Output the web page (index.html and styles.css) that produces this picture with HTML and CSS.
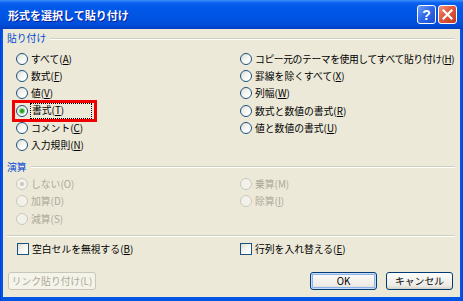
FILE: index.html
```html
<!DOCTYPE html>
<html lang="ja">
<head>
    <meta charset="UTF-8">
    <title>形式を選択して貼り付け</title>
    <link rel="stylesheet" href="styles.css">
</head>
<body>
    <div class="window">
        <div class="titlebar">
            <span class="title">形式を選択して貼り付け</span>
            <div class="title-buttons">
                <span class="tbtn help">?</span>
                <span class="tbtn close">
                    <svg width="11" height="11" viewBox="0 0 11 11">
                        <path d="M1.5 1.5 L9.5 9.5 M9.5 1.5 L1.5 9.5" stroke="#fff" stroke-width="2.2" stroke-linecap="square"/>
                    </svg>
                </span>
            </div>
        </div>

        <div class="content">
            <div class="group-head"><span>貼り付け</span></div>
            <div class="options paste">
                <div class="col">
                    <div class="opt"><span class="radio"></span><span>すべて(<u>A</u>)</span></div>
                    <div class="opt"><span class="radio"></span><span>数式(<u>F</u>)</span></div>
                    <div class="opt"><span class="radio"></span><span>値(<u>V</u>)</span></div>
                    <div class="opt marked">
                        <span class="radio on"></span><span class="focus">書式(<u>T</u>)</span>
                        <span class="highlight"></span>
                    </div>
                    <div class="opt"><span class="radio"></span><span>コメント(<u>C</u>)</span></div>
                    <div class="opt"><span class="radio"></span><span>入力規則(<u>N</u>)</span></div>
                </div>
                <div class="col">
                    <div class="opt"><span class="radio"></span><span class="long">コピー元のテーマを使用してすべて貼り付け(<u>H</u>)</span></div>
                    <div class="opt"><span class="radio"></span><span>罫線を除くすべて(<u>X</u>)</span></div>
                    <div class="opt"><span class="radio"></span><span>列幅(<u>W</u>)</span></div>
                    <div class="opt"><span class="radio"></span><span>数式と数値の書式(<u>R</u>)</span></div>
                    <div class="opt"><span class="radio"></span><span>値と数値の書式(<u>U</u>)</span></div>
                </div>
            </div>

            <div class="group-head second"><span>演算</span></div>
            <div class="options ops">
                <div class="col">
                    <div class="opt dis"><span class="radio on"></span><span>しない(O)</span></div>
                    <div class="opt dis"><span class="radio"></span><span>加算(D)</span></div>
                    <div class="opt dis"><span class="radio"></span><span>減算(S)</span></div>
                </div>
                <div class="col">
                    <div class="opt dis"><span class="radio"></span><span>乗算(M)</span></div>
                    <div class="opt dis"><span class="radio"></span><span>除算(<u>I</u>)</span></div>
                </div>
            </div>

            <div class="sep"></div>

            <div class="checks">
                <div class="opt check-left"><span class="checkbox"></span><span>空白セルを無視する(<u>B</u>)</span></div>
                <div class="opt"><span class="checkbox"></span><span>行列を入れ替える(<u>E</u>)</span></div>
            </div>

            <div class="buttons">
                <span class="btn disabled link">リンク貼り付け(L)</span>
                <span class="spacer"></span>
                <span class="btn default">OK</span>
                <span class="btn">キャンセル</span>
            </div>
        </div>
    </div>
</body>
</html>
```

FILE: styles.css
```css
* {
    box-sizing: border-box;
}

body {
    margin: 0;
    width: 463px;
    height: 301px;
    overflow: hidden;
    font-family: "Noto Sans CJK JP", "Liberation Sans", sans-serif;
    font-size: 9.8px;
    color: #000000;
    background-color: #FFFFFF;
}

.window {
    width: 463px;
    height: 301px;
    display: flex;
    flex-direction: column;
    background: linear-gradient(to right, #0831D9 0, #0055E5 1px, #0055E5 462px, #0831D9 463px);
}

/* title bar */
.titlebar {
    height: 29px;
    display: flex;
    align-items: center;
    justify-content: space-between;
    padding: 0 6px 0 8px;
    background: linear-gradient(to bottom, #3D8FFB 0, #0A5FF0 3px, #0058E8 9px, #0054E3 18px, #004DD9 25px, #003EC0 29px);
}

.title {
    color: #FFFFFF;
    font-weight: bold;
    font-size: 11px;
    text-shadow: 1px 1px 0 #0A1E9A;
}

.title-buttons {
    display: flex;
    gap: 2px;
}

.tbtn {
    width: 19px;
    height: 19px;
    border: 1px solid #FFFFFF;
    border-radius: 3px;
    display: flex;
    align-items: center;
    justify-content: center;
    color: #FFFFFF;
}

.help {
    background: linear-gradient(135deg, #6E9DF8 0%, #2F66E8 50%, #1A4DD6 100%);
    font-family: "Liberation Sans", sans-serif;
    font-weight: bold;
    font-size: 14px;
    line-height: 1;
}

.close {
    background: linear-gradient(135deg, #F0937A 0%, #E0583A 45%, #C53A1E 100%);
}

/* dialog body */
.content {
    flex: 1;
    margin: 0 3px 4px;
    background-color: #ECE9D8;
    padding: 3px 5px 0 4px;
    display: flex;
    flex-direction: column;
}

.group-head {
    height: 12px;
    line-height: 12px;
    display: flex;
    align-items: center;
    gap: 4px;
    color: #0046D5;
}

.group-head::after {
    content: "";
    flex: 1;
    height: 1px;
    background-color: #D0D0BF;
    box-shadow: 0 1px 0 #FFFFFF;
}

.group-head.second {
    margin-top: 7px;
}

.options {
    display: flex;
    padding-left: 9px;
}

.paste {
    margin-top: 6px;
}

.ops {
    margin-top: 2.5px;
}

.options .col:first-child {
    width: 224px;
    flex-shrink: 0;
}

.opt {
    height: 17.3px;
    display: flex;
    align-items: center;
    gap: 3px;
    white-space: nowrap;
}

.opt u {
    text-decoration-thickness: 1px;
    text-underline-offset: 1px;
}

.long {
    letter-spacing: -0.4px;
}

.radio {
    width: 12px;
    height: 12px;
    flex-shrink: 0;
    border: 1px solid #1C5180;
    border-radius: 50%;
    background: linear-gradient(135deg, #DCDBD3 0%, #F4F4F0 45%, #FFFFFF 80%);
    display: flex;
    align-items: center;
    justify-content: center;
}

.radio.on::after {
    content: "";
    width: 4px;
    height: 4px;
    border-radius: 50%;
    background-color: #21A121;
    box-shadow: 0 0 0 1px #8AD88A;
}

.opt.dis {
    color: #ACA899;
}

.dis .radio {
    border-color: #CAC8BB;
    background: #F2F1EA;
}

.dis .radio.on::after {
    background-color: #CAC8BB;
    box-shadow: none;
}

.marked {
    position: relative;
}

.focus {
    width: 62px;
    height: 16px;
    line-height: 15px;
    margin-left: -1px;
    padding-left: 2px;
    outline: 1px dotted #000000;
    outline-offset: -1px;
}

/* annotation box drawn over the 書式 row */
.highlight {
    position: absolute;
    left: -4px;
    top: -1.5px;
    width: 85px;
    height: 22px;
    border: 3px solid #F00000;
}

.sep {
    margin-top: 7.8px;
    height: 2px;
    border-top: 1px solid #D0D0BF;
    border-bottom: 1px solid #FFFFFF;
}

.checks {
    margin-top: 3.3px;
    display: flex;
    padding-left: 10px;
}

.check-left {
    width: 223px;
    flex-shrink: 0;
}

.checkbox {
    width: 12px;
    height: 12px;
    flex-shrink: 0;
    border: 1px solid #1C5180;
    background: linear-gradient(135deg, #DCDBD3 0%, #F4F4F0 45%, #FFFFFF 80%);
}

/* buttons */
.buttons {
    margin-top: 14.4px;
    display: flex;
    gap: 9px;
    padding: 0 2px 0 1px;
}

.spacer {
    flex: 1;
}

.btn {
    width: 67px;
    height: 18px;
    border: 1px solid #003C74;
    border-radius: 3px;
    background: linear-gradient(to bottom, #FFFFFF 0%, #F4F3EE 40%, #ECEBE6 80%, #D6D0C5 100%);
    display: flex;
    align-items: center;
    justify-content: center;
}

.btn.default {
    box-shadow: inset 0 0 0 1px #C7DDFA, inset 0 0 0 2px #8DB1EA;
}

.btn.link {
    width: 88px;
}

.btn.disabled {
    border-color: #C9C7BA;
    background: #F5F4EA;
    color: #ACA899;
}
```
